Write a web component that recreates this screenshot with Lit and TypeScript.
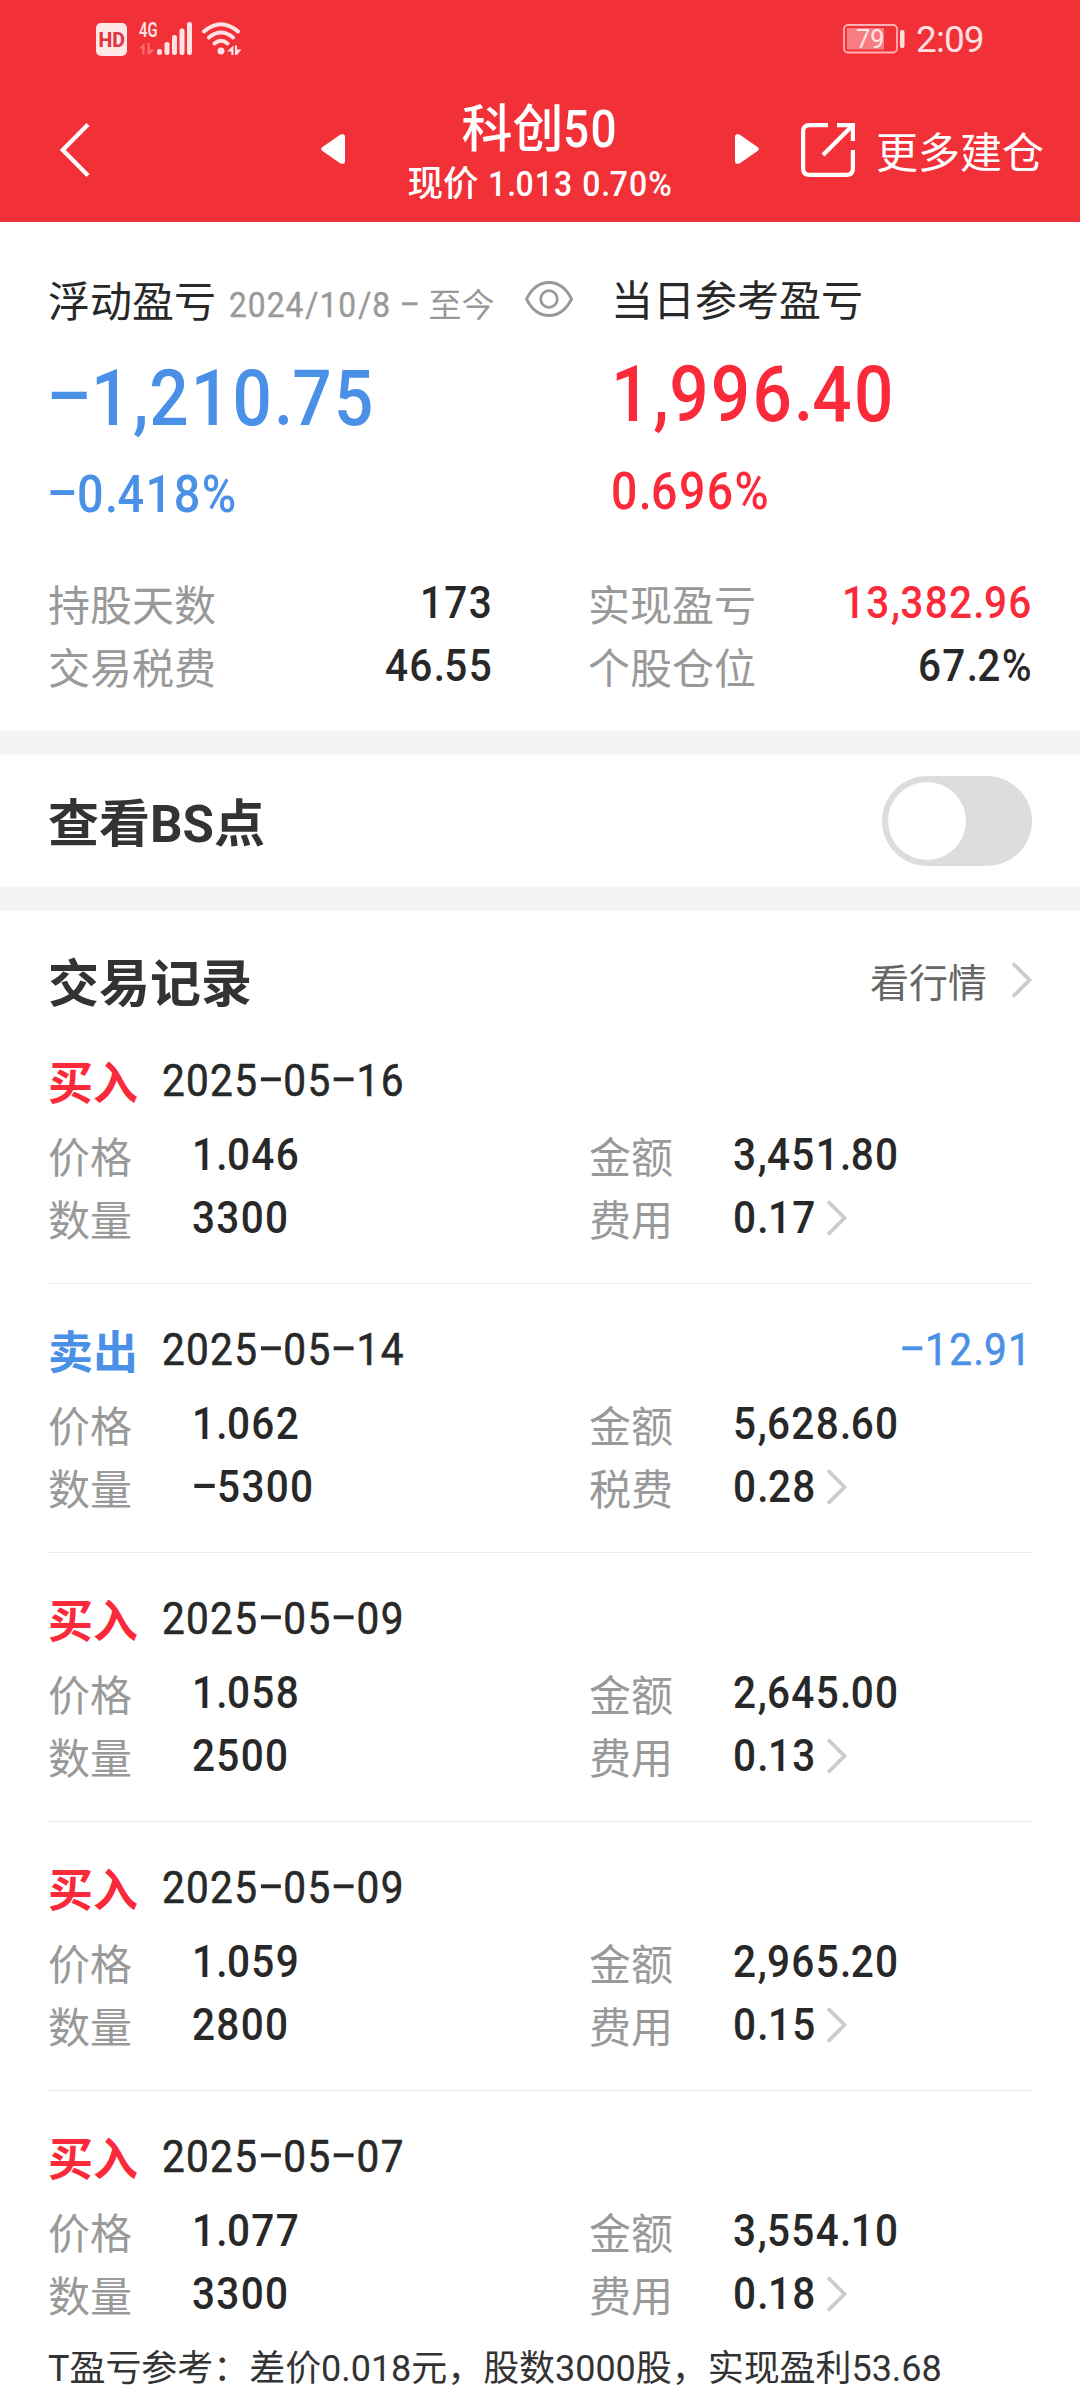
import { LitElement, html, css, svg } from "lit";
import { customElement, property, state } from "lit/decorators.js";

interface Trade {
  side: "buy" | "sell";
  date: string;
  price: string;
  qty: string;
  amount: string;
  feeLabel: string;
  fee: string;
  profit?: string;
}

const TRADES: Trade[] = [
  { side: "buy", date: "2025-05-16", price: "1.046", qty: "3300", amount: "3,451.80", feeLabel: "费用", fee: "0.17" },
  { side: "sell", date: "2025-05-14", price: "1.062", qty: "-5300", amount: "5,628.60", feeLabel: "税费", fee: "0.28", profit: "-12.91" },
  { side: "buy", date: "2025-05-09", price: "1.058", qty: "2500", amount: "2,645.00", feeLabel: "费用", fee: "0.13" },
  { side: "buy", date: "2025-05-09", price: "1.059", qty: "2800", amount: "2,965.20", feeLabel: "费用", fee: "0.15" },
  { side: "buy", date: "2025-05-07", price: "1.077", qty: "3300", amount: "3,554.10", feeLabel: "费用", fee: "0.18" },
];

const SQUEEZE = 0.9;
const DIGIT = 0.5935;
const ADVANCE: Record<string, number> = { ".": 0.264, ",": 0.24, "%": 0.769, "/": 0.48, " ": 0.281, "-": 0.62 };
const MARK_CLASS: Record<string, string> = { ".": "dot", ",": "comma", "/": "slash", "-": "dash" };

/** Condensed numerals; the box is shrunk to the width that is really painted. */
@customElement("din-number")
export class DinNumber extends LitElement {
  @property() value = "";

  static styles = css`
    :host {
      display: inline-block;
      font-family: Roboto, "Liberation Sans", sans-serif;
      font-weight: 500;
      white-space: pre;
    }
    .num {
      display: inline-block;
      letter-spacing: 0.032em;
      transform: scaleX(0.9);
      transform-origin: left center;
    }
    .dot, .comma, .slash, .dash { display: inline-block; letter-spacing: 0; text-align: center; }
    .dot { width: 0.264em; }
    .comma { width: 0.24em; }
    .slash { width: 0.48em; }
    .dash { width: 0.62em; transform: translateY(-0.075em) scaleX(1.95); }
  `;

  render() {
    const chars = [...this.value];
    const width = chars.reduce((sum, c) => sum + (ADVANCE[c] ?? DIGIT), 0);
    const slack = -(width * (1 - SQUEEZE)).toFixed(3);
    return html`<span class="num" style="margin-right:${slack}em">${chars.map((c) =>
      MARK_CLASS[c] ? html`<span class=${MARK_CLASS[c]}>${c}</span>` : c
    )}</span>`;
  }
}

const chevron = html`<svg class="chevron" width="22" height="38" viewBox="0 0 22 38" fill="none">
  <path d="M2 2.500L18.500 19L2 35.500" stroke="#ccc" stroke-width="3.800" />
</svg>`;

@customElement("app-root")
export class AppRoot extends LitElement {
  @state() private showPoints = false;

  static styles = css`
    :host {
      display: block;
      width: 1080px;
      height: 2400px;
      overflow: hidden;
      background: #fff;
      color: #282828;
      font-family: "Noto Sans CJK SC", sans-serif;
      font-size: 42px;
    }
    * { box-sizing: border-box; }
    svg { display: block; flex: none; }
    .top { height: 222px; background: #f13038; color: #fff; }
    .status {
      height: 78px;
      padding: 0 96px 0 96px;
      display: flex;
      align-items: center;
    }
    .network { margin-left: 12px; }
    .wifi { margin-left: 10px; }
    .battery { margin-left: auto; }
    .time {
      margin-left: 10px;
      padding-top: 2px;
      width: 68px;
      font: 400 37px/40px Roboto, sans-serif;
      letter-spacing: -0.9px;
      color: #ffdfe0;
    }
    .nav { height: 144px; padding-left: 60px; display: flex; align-items: center; }
    .prev { margin-left: 231px; margin-bottom: 2px; }
    .next { margin-bottom: 2px; }
    .title-block {
      width: 390px;
      padding-bottom: 1px;
      display: flex;
      flex-direction: column;
      align-items: center;
    }
    .title, .quote { display: flex; align-items: baseline; }
    .title { font-size: 51px; line-height: 60px; font-weight: 500; }
    .quote { font-size: 35.500px; line-height: 42px; gap: 9px; font-weight: 500; }
    .share { margin-left: 42px; }
    .more { margin-left: 21px; line-height: 60px; white-space: nowrap; }

    .summary { height: 509px; padding: 47px 48px 0; }
    .pnl { display: flex; height: 303px; }
    .pnl-left { width: 563px; }
    .line { height: 60px; line-height: 60px; display: flex; align-items: baseline; white-space: nowrap; }
    .pnl-right .line { margin-top: -1px; }
    .range { margin-left: 13px; color: #999; font-size: 33px; display: flex; align-items: baseline; }
    .range din-number { font-size: 35.200px; font-weight: 400; -webkit-text-stroke: 0.4px currentColor; }
    .eye { margin-left: 30px; align-self: center; }
    .big { height: 90px; line-height: 90px; margin-top: 18px; font-size: 77px; }
    .pnl-right .big { margin-top: 15px; }
    .pct { height: 60px; line-height: 60px; margin-top: 23px; font-size: 52px; }
    .pnl-right .pct { margin-top: 24px; font-size: 51.500px; }
    .red { color: #fa2a3a; }
    .blue { color: #4a90e6; }
    .stats {
      margin-top: -1px;
      display: grid;
      grid-template-columns: 445px 445px;
      column-gap: 95px;
    }
    .stat { height: 63px; line-height: 63px; display: flex; justify-content: space-between; }
    .label { color: #999; }
    .stat din-number, .cell din-number { font-size: 45px; }

    .band { height: 24px; background: #f4f4f4; }
    .points {
      height: 132px;
      padding: 0 48px;
      display: flex;
      align-items: center;
      justify-content: space-between;
    }
    .heading { font-size: 51px; font-weight: 700; line-height: 64px; color: #333; white-space: nowrap; }
    .points .heading { padding-top: 3px; }
    .latin { font-family: Roboto, sans-serif; }
    .switch {
      width: 150px;
      height: 90px;
      padding: 6px;
      border-radius: 45px;
      background: #ddd;
      display: flex;
    }
    .switch.on { background: #f13038; justify-content: flex-end; }
    .knob { width: 78px; height: 78px; border-radius: 50%; background: #fff; }

    .list-head {
      height: 104px;
      padding: 33px 47px 0 48px;
      display: flex;
      align-items: center;
      justify-content: space-between;
    }
    .link { display: flex; align-items: center; gap: 24px; font-size: 39px; line-height: 60px; color: #666; }
    .records { padding: 0 48px; }
    .record { height: 269px; padding-top: 36px; border-bottom: 1px solid #ebebeb; }
    .record:last-child { border-bottom: 0; }
    .record-head { height: 60px; line-height: 60px; display: flex; font-size: 45px; margin-bottom: 12px; }
    .side { font-weight: 700; width: 114px; }
    .record-head din-number { font-weight: 400; -webkit-text-stroke: 0.6px currentColor; }
    .profit { margin-left: auto; }
    .row { height: 63px; line-height: 63px; display: grid; grid-template-columns: 541px 1fr; }
    .cell { display: flex; align-items: center; }
    .cell .label { width: 144px; }
    .cell .chevron { margin-left: 9px; }
    .note {
      margin-top: -18px;
      padding-left: 48px;
      font: 400 36px/54px Roboto, "Noto Sans CJK SC", sans-serif;
      letter-spacing: -0.050px;
      color: #333;
      white-space: nowrap;
    }
  `;

  private renderTop() {
    return html`<header class="top">
      <div class="status">
        <svg width="31" height="33" viewBox="0 0 31 33">
          <rect width="31" height="33" rx="5" fill="#ffe6e7" />
          <text x="2.500" y="24" font-family="Roboto, sans-serif" font-size="21" font-weight="800" textLength="26.500" lengthAdjust="spacingAndGlyphs" fill="#dc3a42">HD</text>
        </svg>
        <svg class="network" width="53" height="46" viewBox="0 -6 53 46">
          <text x="0" y="15" font-family="Roboto, sans-serif" font-size="20.500" font-weight="600" textLength="18.500" lengthAdjust="spacingAndGlyphs" fill="#ffe2e3">4G</text>
          <path d="M0 26.500L5.500 21V32.500H3.200V26.500ZM8.500 21H10.700V27.500H15.500L10.700 32.500H8.500Z" fill="#ff6b72" />
          ${[[18, 27, 6], [25.500, 20, 13], [33, 13, 20], [40.500, 6.500, 26.500], [48, 0, 33]].map(
            ([x, y, h]) => svg`<rect x=${x} y=${y} width="5" height=${h} rx="2.200" fill="#ffe2e3"/>`
          )}
        </svg>
        <svg class="wifi" width="40" height="34" viewBox="0 0 40 34" fill="none" stroke="#ffe2e3" stroke-width="4" stroke-linecap="round">
          <path d="M2 9.500Q19 -5 36 9.500M7 15.500Q19 5.500 31 15.500M12.500 21.500Q19 16 25.500 21.500" />
          <circle cx="19" cy="29" r="3.500" fill="#ffe2e3" stroke="none" />
          <path d="M25 29.500L31.500 23.500V33H29.300V29.500ZM33 23.500H35V27.500H39.500L35 33H33Z" fill="#ffe2e3" stroke="none" />
        </svg>
        <svg class="battery" width="63" height="30" viewBox="0 0 63 30">
          <rect x="1" y="1" width="53" height="27.500" rx="4" fill="none" stroke="#ffb0b4" stroke-width="1.800" />
          <rect x="4" y="4" width="37" height="21.500" fill="#f87c82" />
          <rect x="57" y="6" width="4.500" height="18" rx="2" fill="#ffdfe0" />
          <text x="13" y="24" font-family="Roboto, sans-serif" font-size="26" textLength="28.500" lengthAdjust="spacingAndGlyphs" fill="#ffe6e7">79</text>
        </svg>
        <span class="time">2:09</span>
      </div>
      <nav class="nav">
        <svg width="30" height="54" viewBox="0 0 30 54" fill="none">
          <path d="M28 1.500L2.800 27L28 52.500" stroke="#fff" stroke-width="4.200" />
        </svg>
        <svg class="prev" width="24" height="30" viewBox="0 0 24 30">
          <path d="M1.500 13L19.500 0.600Q24 -1 24 3V27Q24 31 19.500 29.400L1.500 17Q-1 15 1.500 13Z" fill="#fff" />
        </svg>
        <div class="title-block">
          <div class="title"><span>科创</span><din-number value="50"></din-number></div>
          <div class="quote"><span>现价</span><din-number value="1.013 0.70%"></din-number></div>
        </div>
        <svg class="next" width="24" height="30" viewBox="0 0 24 30">
          <path d="M22.500 13L4.500 0.600Q0 -1 0 3V27Q0 31 4.500 29.400L22.500 17Q25 15 22.500 13Z" fill="#fff" />
        </svg>
        <svg class="share" width="54" height="54" viewBox="0 0 54 54" fill="none" stroke="#fff" stroke-width="4.200">
          <path d="M27 2.100H8.500Q2.100 2.100 2.100 8.500V45.500Q2.100 51.900 8.500 51.900H45.500Q51.900 51.900 51.900 45.500V27" />
          <path d="M36 2.100H51.900V18M51 3L22 32" />
        </svg>
        <span class="more">更多建仓</span>
      </nav>
    </header>`;
  }

  private renderSummary() {
    const stat = (label: string, value: string, cls = "") =>
      html`<div class="stat"><span class="label">${label}</span><din-number class=${cls} value=${value}></din-number></div>`;
    return html`<section class="summary">
      <div class="pnl">
        <div class="pnl-left">
          <div class="line">
            <span>浮动盈亏</span>
            <span class="range"><din-number value="2024/10/8 - "></din-number><span>至今</span></span>
            <svg class="eye" width="48" height="36" viewBox="0 0 48 36" fill="none" stroke="#999" stroke-width="2.800">
              <path d="M1.500 18C7 7 15 1.500 24 1.500S41 7 46.500 18C41 29 33 34.500 24 34.500S7 29 1.500 18Z" />
              <circle cx="24" cy="18" r="8.300" />
            </svg>
          </div>
          <div class="big blue"><din-number value="-1,210.75"></din-number></div>
          <div class="pct blue"><din-number value="-0.418%"></din-number></div>
        </div>
        <div class="pnl-right">
          <div class="line">当日参考盈亏</div>
          <div class="big red"><din-number value="1,996.40"></din-number></div>
          <div class="pct red"><din-number value="0.696%"></din-number></div>
        </div>
      </div>
      <div class="stats">
        ${stat("持股天数", "173")} ${stat("实现盈亏", "13,382.96", "red")}
        ${stat("交易税费", "46.55")} ${stat("个股仓位", "67.2%")}
      </div>
    </section>`;
  }

  private renderTrade(t: Trade) {
    const cell = (label: string, value: string, more = false) =>
      html`<div class="cell"><span class="label">${label}</span><din-number value=${value}></din-number>${more ? chevron : ""}</div>`;
    return html`<article class="record">
      <div class="record-head">
        <span class="side ${t.side === "buy" ? "red" : "blue"}">${t.side === "buy" ? "买入" : "卖出"}</span>
        <din-number value=${t.date}></din-number>
        ${t.profit ? html`<din-number class="profit blue" value=${t.profit}></din-number>` : ""}
      </div>
      <div class="row">${cell("价格", t.price)}${cell("金额", t.amount)}</div>
      <div class="row">${cell("数量", t.qty)}${cell(t.feeLabel, t.fee, true)}</div>
    </article>`;
  }

  render() {
    return html`${this.renderTop()} ${this.renderSummary()}
      <div class="band"></div>
      <section class="points">
        <span class="heading">查看<span class="latin">BS</span>点</span>
        <div class="switch ${this.showPoints ? "on" : ""}" @click=${() => (this.showPoints = !this.showPoints)}>
          <div class="knob"></div>
        </div>
      </section>
      <div class="band"></div>
      <section>
        <div class="list-head">
          <span class="heading">交易记录</span>
          <span class="link">看行情${chevron}</span>
        </div>
        <div class="records">${TRADES.map((t) => this.renderTrade(t))}</div>
        <div class="note">T盈亏参考：差价0.018元，股数3000股，实现盈利53.68</div>
      </section>`;
  }
}
